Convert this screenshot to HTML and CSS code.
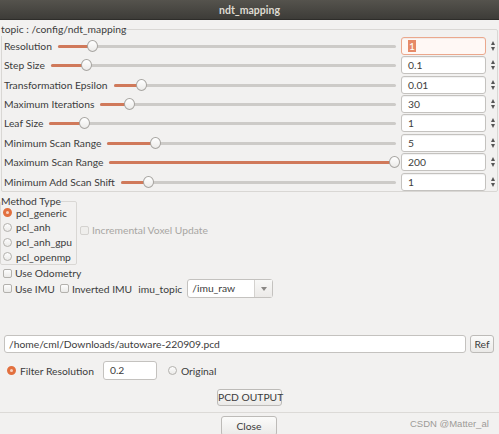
FILE: index.html
```html
<!DOCTYPE html>
<html>
<head>
<meta charset="utf-8">
<link rel="stylesheet" href="styles.css">
</head>
<body>
<div class="window">
  <div class="titlebar">ndt_mapping</div>
  <div class="content">
    <fieldset class="group topic">
      <legend>topic : /config/ndt_mapping</legend>
      <div class="row">
        <span class="lbl">Resolution</span>
        <div class="slider" style="--p:0.088"><div class="fill"></div><div class="handle"></div></div>
        <div class="spin focus"><span class="sel">1</span></div>
        <div class="arrows"><span class="up"></span><span class="down"></span></div>
      </div>
      <div class="row">
        <span class="lbl">Step Size</span>
        <div class="slider" style="--p:0.089"><div class="fill"></div><div class="handle"></div></div>
        <div class="spin">0.1</div>
        <div class="arrows"><span class="up"></span><span class="down"></span></div>
      </div>
      <div class="row">
        <span class="lbl">Transformation Epsilon</span>
        <div class="slider" style="--p:0.081"><div class="fill"></div><div class="handle"></div></div>
        <div class="spin">0.01</div>
        <div class="arrows"><span class="up"></span><span class="down"></span></div>
      </div>
      <div class="row">
        <span class="lbl">Maximum Iterations</span>
        <div class="slider" style="--p:0.081"><div class="fill"></div><div class="handle"></div></div>
        <div class="spin">30</div>
        <div class="arrows"><span class="up"></span><span class="down"></span></div>
      </div>
      <div class="row">
        <span class="lbl">Leaf Size</span>
        <div class="slider" style="--p:0.086"><div class="fill"></div><div class="handle"></div></div>
        <div class="spin">1</div>
        <div class="arrows"><span class="up"></span><span class="down"></span></div>
      </div>
      <div class="row">
        <span class="lbl">Minimum Scan Range</span>
        <div class="slider" style="--p:0.15"><div class="fill"></div><div class="handle"></div></div>
        <div class="spin">5</div>
        <div class="arrows"><span class="up"></span><span class="down"></span></div>
      </div>
      <div class="row">
        <span class="lbl">Maximum Scan Range</span>
        <div class="slider" style="--p:1"><div class="fill"></div><div class="handle"></div></div>
        <div class="spin">200</div>
        <div class="arrows"><span class="up"></span><span class="down"></span></div>
      </div>
      <div class="row">
        <span class="lbl">Minimum Add Scan Shift</span>
        <div class="slider" style="--p:0.083"><div class="fill"></div><div class="handle"></div></div>
        <div class="spin">1</div>
        <div class="arrows"><span class="up"></span><span class="down"></span></div>
      </div>
    </fieldset>

    <div class="method-row">
      <fieldset class="group method">
        <legend>Method Type</legend>
        <div class="opt"><span class="radio on"></span>pcl_generic</div>
        <div class="opt"><span class="radio"></span>pcl_anh</div>
        <div class="opt"><span class="radio"></span>pcl_anh_gpu</div>
        <div class="opt"><span class="radio"></span>pcl_openmp</div>
      </fieldset>
      <div class="opt disabled"><span class="check"></span>Incremental Voxel Update</div>
    </div>

    <div class="opt odo"><span class="check"></span>Use Odometry</div>
    <div class="imu-row">
      <div class="opt"><span class="check"></span>Use IMU</div>
      <div class="opt"><span class="check"></span>Inverted IMU</div>
      <span class="imu-lbl">imu_topic</span>
      <div class="combo"><span class="combo-text">/imu_raw</span><span class="combo-btn"><span class="tri"></span></span></div>
    </div>

    <div class="path-row">
      <div class="field path">/home/cml/Downloads/autoware-220909.pcd</div>
      <div class="btn ref">Ref</div>
    </div>

    <div class="filter-row">
      <div class="opt"><span class="radio on"></span>Filter Resolution</div>
      <div class="field small">0.2</div>
      <div class="opt"><span class="radio"></span>Original</div>
    </div>

    <div class="pcd-row"><div class="btn pcd">PCD OUTPUT</div></div>
    <div class="sep"></div>
    <div class="close-row">
      <div class="btn close">Close</div>
      <span class="watermark">CSDN @Matter_al</span>
    </div>
  </div>
</div>
</body>
</html>
```

FILE: styles.css
```css
* { box-sizing: border-box; }
html, body { margin: 0; padding: 0; }
body {
  width: 499px;
  height: 434px;
  overflow: hidden;
  background: #f2f1f0;
  font-family: "Lato", "Open Sans", sans-serif;
  font-size: 10.3px;
  color: #3c3c3c;
}
.window { width: 499px; height: 434px; display: flex; flex-direction: column; }
.titlebar {
  height: 20px;
  flex: none;
  background: linear-gradient(#55534d, #3d3c38);
  color: #dfdbd2;
  font-weight: bold;
  font-size: 10.5px;
  text-align: center;
  line-height: 21px;
  border-bottom: 1px solid #2e2d2a;
}
.content { display: flex; flex-direction: column; }

.group {
  margin: 0;
  border: 1px solid #d9d7d4;
  border-radius: 2px;
  padding: 0 0 0 2px;
}
.group legend {
  padding: 0;
  margin-left: -3px;
  line-height: 14px;
  background: #f2f1f0;
}
.topic { margin: 2px 1px 0 1px; }
.row {
  height: 19.43px;
  display: flex;
  align-items: center;
}
.lbl { white-space: nowrap; margin-right: 6px; }
.slider {
  flex: 1;
  height: 12px;
  position: relative;
  margin-right: 1px;
}
.slider::before {
  content: "";
  position: absolute;
  left: 0; right: 4px; top: 5px;
  height: 3px;
  border-radius: 2px;
  background: #cdcbc8;
}
.fill {
  position: absolute;
  left: 0; top: 5px;
  height: 3px;
  border-radius: 2px;
  background: #d0795a;
  width: calc(5px + var(--p) * (100% - 10px));
}
.handle {
  position: absolute;
  top: 0;
  left: calc(var(--p) * (100% - 11px));
  width: 11px; height: 12px;
  border-radius: 50%;
  border: 1px solid #a7a5a1;
  background: linear-gradient(#ffffff, #ecebe9);
}
.spin {
  width: 85px;
  height: 18px;
  flex: none;
  border: 1px solid #c4c2bf;
  border-radius: 3px;
  background: #fff;
  padding-left: 6px;
  line-height: 16px;
  box-shadow: inset 0 1px 1px rgba(0,0,0,0.06);
}
.spin.focus { border-color: #eba88d; background: #fff8f5; }
.sel { background: #e68a68; color: #fff; padding: 0 1px; }
.arrows {
  width: 9px;
  flex: none;
  display: flex;
  flex-direction: column;
  align-items: center;
  gap: 2px;
  margin-left: 2px;
}
.up, .down { width: 0; height: 0; border-left: 2.5px solid transparent; border-right: 2.5px solid transparent; }
.up { border-bottom: 4px solid #555; }
.down { border-top: 4px solid #555; }

.method-row { display: flex; align-items: center; margin-top: 3px; }
.method { padding: 0 4px 0 2px; width: 75px; }
.method legend { margin-left: -2px; line-height: 12px; margin-bottom: -2px; }
.method .opt { height: 14.7px; }
.opt { display: flex; align-items: center; white-space: nowrap; }
.radio {
  width: 9px; height: 9px;
  border-radius: 50%;
  border: 1px solid #b3b1ad;
  background: linear-gradient(#fdfdfd, #ebeae8);
  margin-right: 4px;
  flex: none;
}
.radio.on {
  border: 3px solid #e2703f;
  background: #f7d2c0;
}
.check {
  width: 9px; height: 9px;
  border: 1px solid #b3b1ad;
  border-radius: 2px;
  background: linear-gradient(#fdfdfd, #ebeae8);
  margin-right: 3px;
  flex: none;
}
.disabled { color: #a8a6a3; margin-left: 3px; }
.disabled .check { border-color: #d4d2cf; background: #efeeec; }
.odo { margin: 1px 0 0 3px; height: 14px; }
.imu-row { display: flex; align-items: center; margin: -1px 0 0 3px; height: 19px; }
.imu-row .opt { margin-right: 5px; }
.imu-row .opt + .opt { margin-right: 6px; }
.imu-lbl { margin-right: 5px; }
.combo {
  display: flex;
  height: 19px;
  border: 1px solid #c4c2bf;
  border-radius: 3px;
  background: #fff;
  width: 86px;
}
.combo-text { flex: 1; padding-left: 4px; line-height: 17px; }
.combo-btn {
  width: 18px;
  border-left: 1px solid #d4d2cf;
  background: linear-gradient(#f8f8f7, #eceae8);
  display: flex; align-items: center; justify-content: center;
}
.tri { width: 0; height: 0; border-left: 3px solid transparent; border-right: 3px solid transparent; border-top: 4px solid #8a8885; }

.path-row { display: flex; align-items: center; margin: 37px 0 0 4px; }
.field {
  height: 18px;
  border: 1px solid #c4c2bf;
  border-radius: 3px;
  background: #fff;
  padding-left: 4px;
  line-height: 16px;
}
.path { width: 462px; }
.btn {
  border: 1px solid #bdbbb8;
  border-radius: 3px;
  background: linear-gradient(#fbfbfa, #ebeae8);
  text-align: center;
  white-space: nowrap;
}
.ref { width: 24px; height: 18px; margin-left: 4px; line-height: 16px; }
.filter-row { display: flex; align-items: center; margin: 8px 0 0 7px; }
.filter-row .opt .radio { margin-right: 4px; }
.small { width: 54px; margin-left: 9px; margin-right: 11px; height: 19px; padding-left: 6px; line-height: 17px; }
.pcd-row { display: flex; margin: 9px 0 0 217px; }
.pcd { width: 65px; height: 17px; line-height: 15px; }
.sep { height: 1px; background: #dcdad7; margin-top: 6px; }
.close-row { display: flex; align-items: flex-start; margin: 3px 0 0 221px; }
.close { width: 56px; height: 20px; line-height: 18px; }
.watermark { margin-left: 133px; margin-top: 2px; color: #9d9b98; font-size: 9.5px; font-family: "Liberation Sans", sans-serif; }
```
